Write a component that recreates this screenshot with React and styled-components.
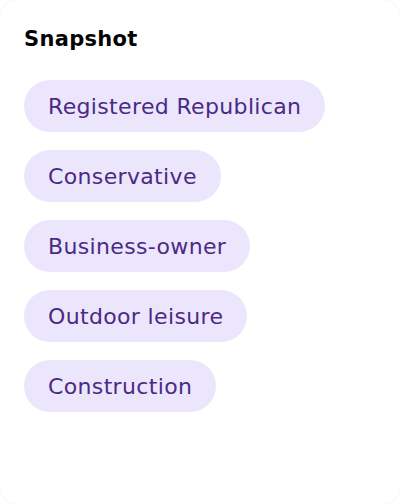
import React from "react";
import styled, { createGlobalStyle } from "styled-components";

const GlobalStyle = createGlobalStyle`
  html, body {
    margin: 0;
    padding: 0;
    background: #ffffff;
  }
  * {
    box-sizing: border-box;
  }
`;

const tags = [
  "Registered Republican",
  "Conservative",
  "Business-owner",
  "Outdoor leisure",
  "Construction",
];

function App() {
  return (
    <>
      <GlobalStyle />
      <Card>
        <Title>Snapshot</Title>
        <TagList>
          {tags.map((t) => (
            <Tag key={t}>{t}</Tag>
          ))}
        </TagList>
      </Card>
    </>
  );
}

export default App;

const Card = styled.div`
  width: 400px;
  height: 504px;
  padding: 27px 24px;
  background: #ffffff;
  border-radius: 18px;
  box-shadow: 0 0 0 1px #f6f6f6;
  font-family: "DejaVu Sans", "Liberation Sans", sans-serif;
`;

const Title = styled.h2`
  margin: 0;
  font-size: 21px;
  line-height: 24px;
  font-weight: 700;
  color: #050505;
  letter-spacing: 0.3px;
`;

const TagList = styled.div`
  display: flex;
  flex-direction: column;
  align-items: flex-start;
  gap: 18px;
  margin-top: 29px;
`;

const Tag = styled.div`
  height: 52px;
  padding: 0 24px;
  display: flex;
  align-items: center;
  border-radius: 26px;
  background: #ece6fd;
  color: #4b2a85;
  font-size: 22px;
  font-weight: 400;
  letter-spacing: 0.35px;
`;
